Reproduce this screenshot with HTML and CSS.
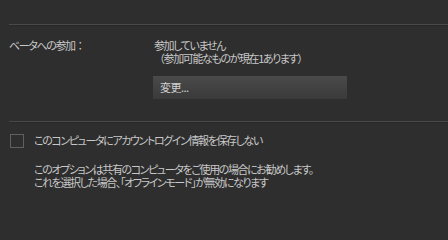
FILE: index.html
```html
<!DOCTYPE html>
<html lang="ja">
<head>
<meta charset="utf-8">
<link rel="stylesheet" href="styles.css">
</head>
<body>
<div class="page">
  <div class="divider"></div>
  <div class="beta-row">
    <div class="label">ベータへの参加<span class="fw">：</span></div>
    <div class="value">
      <div class="status">参加していません<br><span class="fw">（</span>参加可能なものが現在1あります<span class="fw">）</span></div>
      <div class="button">変更...</div>
    </div>
  </div>
  <div class="divider"></div>
  <div class="check-row">
    <span class="checkbox"></span>
    <span class="check-label">このコンピュータにアカウントログイン情報を保存しない</span>
  </div>
  <div class="desc">このオプションは共有のコンピュータをご使用の場合にお勧めします。<br>これを選択した場合、「オフラインモード」が無効になります</div>
</div>
</body>
</html>
```
FILE: styles.css
```css
html, body {
  margin: 0;
  padding: 0;
  background: #2e2e2e;
}
body {
  width: 448px;
  height: 230px;
  overflow: hidden;
  font-family: "Noto Sans CJK JP", "Noto Sans", sans-serif;
  font-size: 11px;
  line-height: 13px;
  color: #c8c8c8;
  font-feature-settings: "palt";
  letter-spacing: -1.4px;
}
.fw {
  font-feature-settings: normal;
}
.page {
  padding-top: 24px;
}
.divider {
  margin-left: 9px;
  height: 1px;
  background: #4a4a4a;
  border-bottom: 1px solid #282828;
}
.beta-row {
  display: flex;
  padding-top: 13px;
  height: 82px;
}
.label {
  width: 144px;
  padding-left: 9px;
}
.value {
  display: flex;
  flex-direction: column;
}
.status {
  padding-left: 1px;
}
.button {
  margin-top: 11px;
  width: 187px;
  height: 23px;
  padding-left: 7px;
  line-height: 23px;
  letter-spacing: -0.5px;
  background: linear-gradient(#4a4a4a, #3a3a3a);
  color: #d0d0d0;
}
.check-row {
  display: flex;
  align-items: center;
  padding-top: 10px;
  padding-left: 10px;
  height: 15px;
}
.checkbox {
  width: 12px;
  height: 12px;
  border: 1px solid #606060;
  margin-right: 10px;
}
.desc {
  padding-left: 34px;
  padding-top: 15px;
}
```
